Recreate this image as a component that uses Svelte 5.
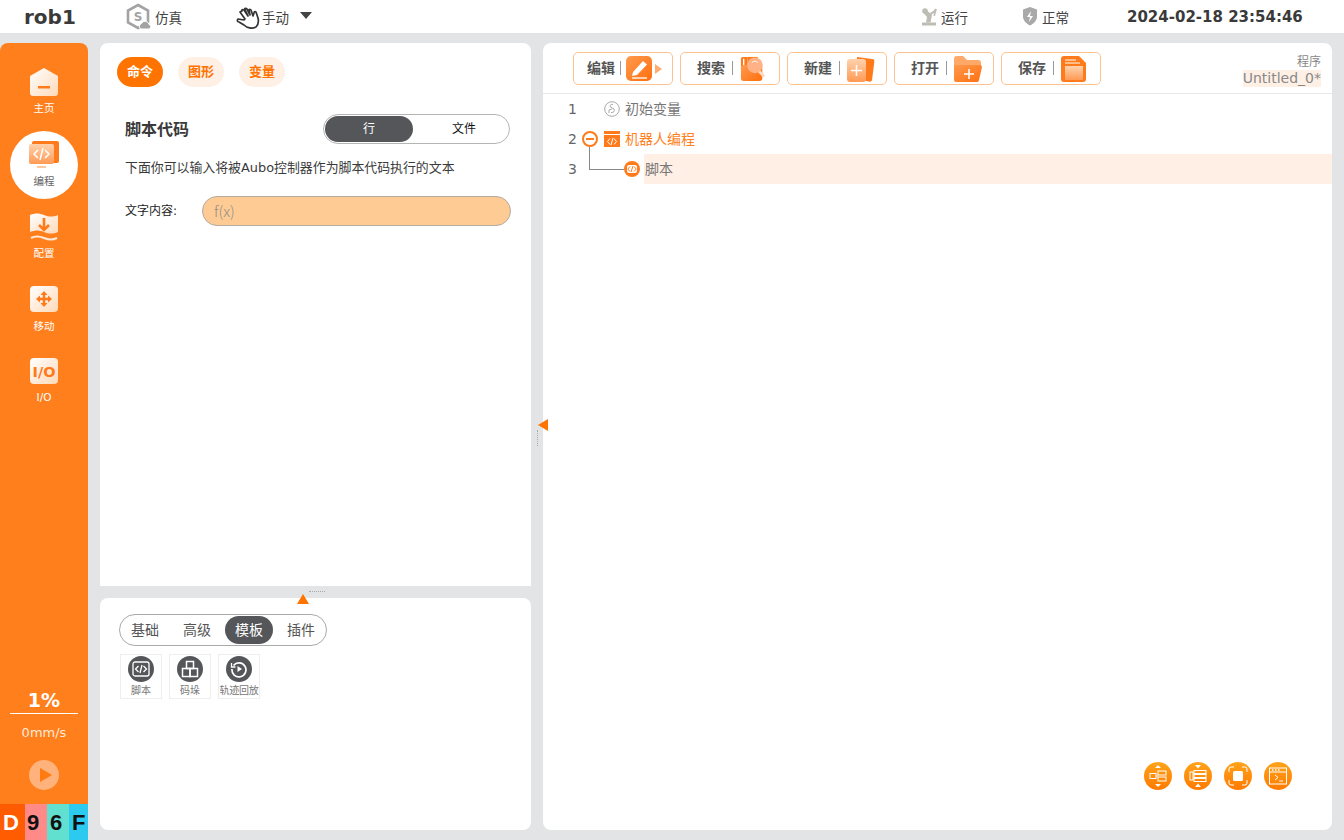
<script>
  const tools = [
    { label: '基础' },
    { label: '高级' },
    { label: '模板', active: true },
    { label: '插件' }
  ];
  const lines = [1, 2, 3];
</script>

<svg class="defs" width="0" height="0" aria-hidden="true">
  <defs>
    <linearGradient id="wh" x1="0" y1="0" x2="1" y2="1">
      <stop offset="0" stop-color="#fff" />
      <stop offset="1" stop-color="#ffd9b8" />
    </linearGradient>
    <linearGradient id="or" x1="0" y1="0" x2="1" y2="1">
      <stop offset="0" stop-color="#ff9a4d" />
      <stop offset="1" stop-color="#ff6f0f" />
    </linearGradient>
    <linearGradient id="pale" x1="0" y1="0" x2="0" y2="1">
      <stop offset="0" stop-color="#ffd2ad" />
      <stop offset="1" stop-color="#ff9a55" />
    </linearGradient>
  </defs>
</svg>

<div class="app">
  <header class="topbar">
    <span class="robot-name">rob1</span>
    <span class="status sim">
      <svg width="25" height="28" viewBox="0 0 25 28">
        <path d="M12 2l10 5.500v12L12 25 2 19.500v-12z" fill="none" stroke="#a3a3a3" stroke-width="2.600" />
        <text x="12" y="18" text-anchor="middle" font-size="12" font-weight="700" fill="#a3a3a3">S</text>
        <path d="M15 26a3 3 0 0 1 .5-5.500 4 4 0 0 1 7.500 1 2.300 2.300 0 0 1 0 4.500z" fill="#a3a3a3" stroke="#fff" />
      </svg>
      仿真
    </span>
    <span class="status mode">
      <svg width="25" height="25" viewBox="0 0 25 25" fill="none" stroke="#333" stroke-width="1.700" stroke-linecap="round" stroke-linejoin="round">
        <path d="M5 8l5 7-1 1-6-1c-1 1-1 3 1 3l5 3c3 3 8 4 12 2 2-2 3-5 2-9l-2-6c-1-1-2 0-2 1l-1 3-2-6c-1-1-2-1-2 0l1 5-3-6c-1-1-3-1-2 1l3 6-4-6c-1-1-3 0-2 1z" />
      </svg>
      手动
      <span class="caret"></span>
    </span>
    <span class="status run">
      <svg width="17" height="18" viewBox="0 0 17 18" fill="#bdbdb5">
        <rect x="1" y="14.500" width="14" height="3" />
        <path d="M5 14.500L6 9 2.500 5l3-3 5.500 5-1.500 7.500z" />
        <circle cx="4" cy="3" r="2.800" />
        <path d="M9 5l4-2.500 1-2 2 1-1 2.500-1 4h-1.500l.5-3-3 2z" />
      </svg>
      运行
    </span>
    <span class="status safe">
      <svg width="16" height="19" viewBox="0 0 16 19">
        <path d="M8 0l7 2.500v7c0 4-3 7-7 9-4-2-7-5-7-9v-7z" fill="#a9a9a9" />
        <path d="M9 4L5 10h3l-1 5 4-6H8z" fill="#fff" />
      </svg>
      正常
    </span>
    <span class="clock">2024-02-18 23:54:46</span>
  </header>

  <div class="workspace">
    <nav class="sidebar">
      <div class="nav-list">
        <div class="nav-item">
          <svg width="28" height="28" viewBox="0 0 28 28">
            <path d="M14 0l14 8v17a3 3 0 0 1-3 3H3a3 3 0 0 1-3-3V8z" fill="url(#wh)" />
            <rect x="8" y="18" width="12" height="2.500" fill="#ff7a1a" />
          </svg>
          <span>主页</span>
        </div>
        <div class="nav-item active">
          <svg width="30" height="28" viewBox="0 0 30 28">
            <rect x="3" y="0" width="27" height="22" rx="2" fill="#ff7a1a" />
            <rect x="0" y="3" width="25" height="20" rx="2" fill="url(#pale)" />
            <path d="M8 25h9v2H8z" fill="#ffc79c" />
            <path d="M9 9l-4 4 4 4M16 9l4 4-4 4M14 7l-3 12" fill="none" stroke="#fff" stroke-width="1.500" />
          </svg>
          <span>编程</span>
        </div>
        <div class="nav-item">
          <svg width="28" height="28" viewBox="0 0 28 28">
            <path d="M0 2c5-2 9-2 14 0 5 2 9 2 14 0v17c-5 2-9 2-14 0-5-2-9-2-14 0z" fill="url(#wh)" />
            <path d="M14 5v12M9 12l5 5 5-5" fill="none" stroke="#ff7a1a" stroke-width="2.600" />
            <path d="M1 25c4-2 8-2 13 0s9 2 13 0" fill="none" stroke="#ffe9d8" stroke-width="2" />
          </svg>
          <span>配置</span>
        </div>
        <div class="nav-item">
          <svg width="28" height="26" viewBox="0 0 28 26">
            <rect width="28" height="26" rx="4" fill="url(#wh)" />
            <path d="M14 8v10M9 13h10" stroke="#ff7a1a" stroke-width="2.400" />
            <path d="M14 5l3.500 4h-7zM14 21l3.500-4h-7zM6 13l4-3.500v7zM22 13l-4-3.500v7z" fill="#ff7a1a" />
          </svg>
          <span class="down">移动</span>
        </div>
        <div class="nav-item">
          <svg width="28" height="26" viewBox="0 0 28 26">
            <rect width="28" height="26" rx="4" fill="url(#wh)" />
            <text x="14" y="19" text-anchor="middle" font-size="14.500" font-weight="700" fill="#ff7a1a">I/O</text>
          </svg>
          <span class="down-2">I/O</span>
        </div>
      </div>

      <div class="speed">
        <div class="percent">1%</div>
        <div class="mm">0mm/s</div>
        <div class="play"><span></span></div>
      </div>
      <div class="code">
        <span class="c-d">D</span><span class="c-9">9</span><span class="c-6">6</span><span class="c-f">F</span>
      </div>
    </nav>

    <div class="left-col">
      <section class="card props">
        <div class="tabs">
          <span class="tab on">命令</span>
          <span class="tab">图形</span>
          <span class="tab">变量</span>
        </div>
        <div class="title-row">
          <h2>脚本代码</h2>
          <div class="toggle">
            <span class="toggle-on">行</span>
            <span class="toggle-off">文件</span>
          </div>
        </div>
        <p class="desc">下面你可以输入将被Aubo控制器作为脚本代码执行的文本</p>
        <div class="field">
          <span class="field-label">文字内容:</span>
          <div class="input">f(x)</div>
        </div>
      </section>

      <section class="card palette">
        <div class="seg">
          {#each tools as t}
            <span class="seg-item" class:seg-on={t.active}>{t.label}</span>
          {/each}
        </div>
        <div class="tiles">
          <div class="tile">
            <span class="disc">
              <svg width="18" height="16" viewBox="0 0 18 16" fill="none" stroke="#fff" stroke-width="1.300">
                <rect x="1" y="1" width="16" height="14" rx="2" />
                <path d="M6.500 5l-3 3 3 3M11.500 5l3 3-3 3M10 4l-2 8" />
              </svg>
            </span>
            <span>脚本</span>
          </div>
          <div class="tile">
            <span class="disc">
              <svg width="18" height="18" viewBox="0 0 18 18" fill="none" stroke="#fff" stroke-width="1.500">
                <rect x="5.500" y="1.500" width="7" height="7" />
                <rect x="1.500" y="8.500" width="7.500" height="8" />
                <rect x="9" y="8.500" width="7.500" height="8" />
              </svg>
            </span>
            <span>码垛</span>
          </div>
          <div class="tile">
            <span class="disc">
              <svg width="18" height="18" viewBox="0 0 18 18" fill="none" stroke="#fff" stroke-width="1.700">
                <path d="M3.500 5.500A7 7 0 1 1 2 9" />
                <path d="M1.500 3v4h4" stroke-width="1.300" />
                <path d="M7.500 6l4.500 3-4.500 3z" fill="#fff" stroke="none" />
              </svg>
            </span>
            <span class="tight">轨迹回放</span>
          </div>
        </div>
        <span class="grip-h"></span>
        <span class="tri-up"></span>
      </section>
    </div>

    <section class="card program">
      <div class="toolbar">
        <div class="btn edit">
          <span>编辑</span><i></i>
          <svg width="26" height="26" viewBox="0 0 26 26">
            <rect width="26" height="25" rx="5" fill="url(#or)" />
            <path d="M7 16L17 5l4 3.500L11 19l-5 1z" fill="#fff" />
            <path d="M6 22h15" stroke="#fff" stroke-width="1.300" />
          </svg>
          <b class="arrow"></b>
        </div>
        <div class="btn">
          <span>搜索</span><i></i>
          <svg width="26" height="26" viewBox="0 0 28 26">
            <path d="M3 0h5v13H1V2a2 2 0 0 1 2-2z" fill="#ff7a1a" />
            <rect x="1" y="9" width="23" height="17" rx="3" fill="url(#or)" />
            <rect x="8" y="0" width="11" height="12" fill="#ff7a1a" />
            <path d="M4 2v7" stroke="#fff" stroke-width="1.500" />
            <path d="M20 15l6 6" stroke="#ffd9bd" stroke-width="3" />
            <circle cx="16" cy="9" r="8.500" fill="#ffb285" />
            <path d="M13 6c2-2 4-2 6 0" fill="none" stroke="#fff" />
          </svg>
        </div>
        <div class="btn">
          <span>新建</span><i></i>
          <svg width="28" height="26" viewBox="0 0 28 26">
            <path d="M10 1l15 2c2 .3 2.500 1 2.300 3L25 24c-.2 1.500-2 2-3 1.500L9 23z" fill="#ff7a1a" />
            <rect x="0" y="3" width="19" height="23" rx="3" fill="url(#pale)" />
            <path d="M9.500 9v11M4 14.500h11" stroke="#fff" stroke-width="1.500" />
          </svg>
        </div>
        <div class="btn">
          <span>打开</span><i></i>
          <svg width="28" height="26" viewBox="0 0 28 26">
            <path d="M0 3a3 3 0 0 1 3-3h6l4 4h11a3 3 0 0 1 3 3v5H0z" fill="#ffa868" />
            <path d="M0 9h27l1 2-3 13a2 2 0 0 1-2 2H2a2 2 0 0 1-2-2z" fill="url(#or)" />
            <path d="M15 13v10M10 18h10" stroke="#fff" stroke-width="1.500" />
          </svg>
        </div>
        <div class="btn">
          <span>保存</span><i></i>
          <svg width="26" height="26" viewBox="0 0 26 26">
            <path d="M3 0h15l7 7v16a3 3 0 0 1-3 3H3a3 3 0 0 1-3-3V3a3 3 0 0 1 3-3z" fill="#ff7a1a" />
            <path d="M4 4h11M4 7h15" stroke="#ffd2ad" stroke-width="1.300" />
            <path d="M4 10h18v14H4z" fill="url(#pale)" />
          </svg>
        </div>
        <div class="file-info">
          <span>程序</span>
          <span class="file-name">Untitled_0*</span>
        </div>
      </div>

      <div class="tree">
        <div class="numbers">
          {#each lines as n}<span>{n}</span>{/each}
        </div>
        <div class="rows">
          <div class="row first">
            <svg width="16" height="16" viewBox="0 0 16 16" fill="none" stroke="#a9a9a9">
              <circle cx="8" cy="8" r="7.300" />
              <path d="M9 3.500c-2-.7-3.500.8-2.500 2.500L10 8c1 1.500 0 4-3 3.500M8 8l-3 1v3" />
            </svg>
            初始变量
          </div>
          <div class="row second">
            <span class="minus"></span>
            <svg width="16" height="16" viewBox="0 0 16 16">
              <path d="M0 0h16v16H0z" fill="#ff7a1a" />
              <path d="M0 3.500h16" stroke="#fff" />
              <path d="M6 7.500l-2.500 3 2.500 3M10 7.500l2.500 3-2.500 3M9 7l-2 7" fill="none" stroke="#fff" />
            </svg>
            机器人编程
          </div>
          <div class="row third">
            <span class="branch"></span>
            <span class="node">
              <svg width="10" height="8" viewBox="0 0 10 8" fill="none" stroke="#ff7a1a">
                <path d="M3 1.500L.8 4 3 6.500M7 1.500L9.200 4 7 6.500M6 1L4 7" />
              </svg>
            </span>
            <span class="row-text">脚本</span>
          </div>
        </div>
      </div>

      <div class="float-tools">
        <span class="ball">
          <svg width="22" height="22" viewBox="0 0 22 22" fill="none" stroke="#fff">
            <rect x="3" y="8.500" width="6" height="5" />
            <rect x="11" y="6" width="8" height="4" />
            <rect x="11" y="12" width="8" height="4" />
            <path d="M9 11h2" />
            <path d="M11 0l3 3H8zM11 22l3-3H8z" fill="#fff" stroke="none" />
          </svg>
        </span>
        <span class="ball">
          <svg width="22" height="22" viewBox="0 0 22 22" fill="none" stroke="#fff">
            <rect x="3" y="7" width="3" height="8" />
            <rect x="7" y="5.500" width="12" height="3" />
            <rect x="7" y="9.500" width="12" height="3" />
            <rect x="7" y="13.500" width="12" height="3" />
            <path d="M8 0h6l-3 3.500zM8 22h6l-3-3.500z" fill="#fff" stroke="none" />
          </svg>
        </span>
        <span class="ball">
          <svg width="20" height="20" viewBox="0 0 20 20" fill="none" stroke="#fff">
            <path d="M1 6V3a2 2 0 0 1 2-2h3M14 1h3a2 2 0 0 1 2 2v3M19 14v3a2 2 0 0 1-2 2h-3M6 19H3a2 2 0 0 1-2-2v-3" />
            <rect x="5" y="5" width="10" height="10" rx="1.500" fill="#fff" stroke="none" />
          </svg>
        </span>
        <span class="ball">
          <svg width="20" height="20" viewBox="0 0 20 20" fill="none" stroke="#fff">
            <rect x="1.500" y="2" width="17" height="16" />
            <path d="M1.500 6h17M7 9l3 2.500L7 14M11 15h4" />
            <path d="M4 4h1.500M7 4h1.500M10 4h1.500" stroke-width="1.500" />
          </svg>
        </span>
      </div>
      <span class="grip-v"></span>
      <span class="tri-left"></span>
    </section>
  </div>
</div>

<style>
  :global(body) {
    margin: 0;
    background: #e3e4e6;
    font-family: "DejaVu Sans", "Noto Sans CJK SC", sans-serif;
    color: #444;
  }
  .defs {
    position: absolute;
  }
  .app {
    width: 1344px;
    height: 840px;
    overflow: hidden;
    display: flex;
    flex-direction: column;
  }

  /* top bar */
  .topbar {
    height: 33px;
    background: #fff;
    display: flex;
    align-items: center;
    flex: none;
  }
  .robot-name {
    margin-left: 24px;
    width: 102px;
    font-size: 20px;
    font-weight: 700;
    color: #3a3a3a;
  }
  .status {
    display: inline-flex;
    align-items: center;
    gap: 3px;
    font-size: 13.500px;
    color: #444;
    height: 33px;
  }
  .sim { width: 109px; gap: 4px; }
  .mode { width: 686px; gap: 2px; }
  .run { width: 101px; }
  .safe { width: 105px; gap: 4px; }
  .caret {
    margin-left: 9px;
    width: 0;
    height: 0;
    border-left: 6px solid transparent;
    border-right: 6px solid transparent;
    border-top: 7px solid #444;
    margin-top: -2px;
  }
  .clock {
    font-size: 15px;
    font-weight: 700;
    color: #3a3a3a;
    white-space: nowrap;
  }

  .workspace {
    flex: 1;
    display: flex;
    padding-top: 10px;
    min-height: 0;
  }

  /* sidebar */
  .sidebar {
    width: 88px;
    flex: none;
    background: #ff7f1c;
    border-radius: 8px 8px 0 0;
    display: flex;
    flex-direction: column;
    color: #fff;
  }
  .nav-list {
    padding-top: 25px;
    display: flex;
    flex-direction: column;
    flex: 1;
  }
  .nav-item {
    height: 72.500px;
    display: flex;
    flex-direction: column;
    align-items: center;
    gap: 5px;
    font-size: 10.500px;
    position: relative;
  }
  .nav-item span {
    line-height: 15px;
    position: relative;
  }
  .nav-item svg {
    position: relative;
    z-index: 1;
  }
  .nav-item.active {
    color: #666;
  }
  .nav-item.active::before {
    content: "";
    position: absolute;
    left: 10px;
    top: -10px;
    width: 68px;
    height: 68px;
    border-radius: 50%;
    background: #fff;
  }
  .down {
    margin-top: 2px;
  }
  .down-2 {
    margin-top: 1px;
  }
  .speed {
    display: flex;
    flex-direction: column;
    align-items: center;
    padding-bottom: 14px;
  }
  .percent {
    width: 68px;
    text-align: center;
    font-size: 19px;
    font-weight: 700;
    line-height: 24px;
    padding-bottom: 1px;
    border-bottom: 1px solid #fff;
  }
  .mm {
    font-size: 13px;
    line-height: 16px;
    margin-top: 11px;
    color: #ffe9d8;
  }
  .play {
    margin-top: 19px;
    width: 30px;
    height: 30px;
    border-radius: 50%;
    background: #ffb27c;
    display: flex;
    align-items: center;
    justify-content: center;
  }
  .play span {
    margin-left: 3px;
    border-left: 12px solid #ff7a0f;
    border-top: 7px solid transparent;
    border-bottom: 7px solid transparent;
  }
  .code {
    display: grid;
    grid-template-columns: 25px 22px 22px 19px;
    height: 36px;
    font-family: "Liberation Sans", sans-serif;
    font-size: 22px;
    font-weight: 700;
    line-height: 38px;
    color: #111;
  }
  .code span {
    padding-left: 2px;
  }
  .c-d { background: #ff5b00; color: #fff; }
  .code .c-d { padding-left: 3px; }
  .c-9 { background: #ff8a88; }
  .c-6 { background: #62e0cf; }
  .code .c-6, .code .c-f { padding-left: 3px; }
  .c-f { background: #2dcaf0; }

  /* cards */
  .card {
    background: #fff;
    border-radius: 8px;
    position: relative;
  }
  .left-col {
    margin-left: 12px;
    width: 431px;
    display: flex;
    flex-direction: column;
    gap: 12px;
    margin-bottom: 10px;
  }
  .props {
    height: 543px;
    border-radius: 8px 8px 0 0;
    padding: 14px 20px 0 17px;
    box-sizing: border-box;
  }
  .tabs {
    display: flex;
    gap: 15px;
  }
  .tab {
    width: 46px;
    height: 30px;
    line-height: 30px;
    border-radius: 15px;
    text-align: center;
    font-size: 13px;
    font-weight: 700;
    color: #ff7300;
    background: #fff0e6;
  }
  .tab.on {
    background: #ff7300;
    color: #fff;
  }
  .title-row {
    margin-top: 27px;
    display: flex;
    justify-content: space-between;
    align-items: center;
    padding: 0 1px 0 8px;
  }
  h2 {
    margin: 0;
    padding-bottom: 2px;
    font-size: 16px;
    font-weight: 700;
    color: #3a3a3a;
  }
  .toggle {
    width: 187px;
    height: 30px;
    box-sizing: border-box;
    border: 1px solid #b5b5b5;
    border-radius: 15px;
    padding: 1px;
    display: grid;
    grid-template-columns: 88px 1fr;
    font-size: 12px;
    line-height: 26px;
    text-align: center;
    color: #111;
  }
  .toggle-on {
    background: #54565a;
    color: #fff;
    border-radius: 13px;
  }
  .toggle-off {
    padding-left: 7px;
  }
  .desc {
    margin: 14px 0 0 8px;
    font-size: 12.900px;
    line-height: 20px;
    color: #3a3a3a;
    white-space: nowrap;
  }
  .field {
    margin: 18px 0 0 8px;
    display: flex;
    align-items: center;
  }
  .field-label {
    width: 77px;
    flex: none;
    font-size: 12px;
    color: #222;
    padding-bottom: 3px;
  }
  .input {
    width: 309px;
    flex: none;
    height: 30px;
    box-sizing: border-box;
    border: 1px solid #b3aaa0;
    border-radius: 15px;
    background: #fecb94;
    padding-left: 11px;
    font-family: "Noto Sans CJK SC", sans-serif;
    font-weight: 300;
    font-size: 15px;
    line-height: 28px;
    color: #948f85;
  }

  .palette {
    flex: 1;
    padding: 16px 0 0 19px;
  }
  .seg {
    width: 208px;
    height: 32px;
    box-sizing: border-box;
    border: 1px solid #aaa;
    border-radius: 16px;
    display: flex;
    align-items: center;
    padding: 0 1px;
    gap: 4px;
  }
  .seg-item {
    width: 48px;
    height: 28px;
    line-height: 28px;
    text-align: center;
    border-radius: 14px;
    font-size: 14px;
    color: #555;
  }
  .seg-on {
    background: #54565a;
    color: #fff;
  }
  .tiles {
    margin: 8px 0 0 1px;
    display: flex;
    gap: 7px;
  }
  .tile {
    width: 42px;
    height: 45px;
    box-sizing: border-box;
    border: 1px solid #eee;
    display: flex;
    flex-direction: column;
    align-items: center;
    font-size: 10px;
    line-height: 14px;
    color: #777;
    padding-top: 1px;
    white-space: nowrap;
  }
  .tight {
    letter-spacing: -0.300px;
  }
  .disc {
    width: 26px;
    height: 26px;
    border-radius: 50%;
    background: #54565a;
    display: flex;
    align-items: center;
    justify-content: center;
    margin-bottom: 2px;
  }
  .grip-h {
    position: absolute;
    left: 209px;
    top: -7px;
    width: 16px;
    border-top: 1px dotted #aaa;
  }
  .tri-up {
    position: absolute;
    left: 197px;
    top: -4px;
    border-left: 6px solid transparent;
    border-right: 6px solid transparent;
    border-bottom: 10px solid #ff7300;
  }

  /* program */
  .program {
    margin-left: 12px;
    width: 789px;
    margin-bottom: 10px;
  }
  .toolbar {
    height: 51px;
    box-sizing: border-box;
    border-bottom: 1px solid #e8e8e8;
    padding: 9px 11px 0 30px;
    display: flex;
    gap: 7px;
  }
  .btn {
    width: 100px;
    height: 33px;
    box-sizing: border-box;
    border: 1px solid #fdc290;
    border-radius: 5px;
    padding-left: 16px;
    display: flex;
    align-items: center;
    font-size: 14px;
    font-weight: 700;
    color: #555;
    gap: 7px;
    flex: none;
  }
  .btn span {
    margin-bottom: 3px;
  }
  .btn.edit {
    padding-left: 13px;
    gap: 5px;
  }
  .btn i {
    width: 1px;
    height: 14px;
    background: #999;
    margin-bottom: 2px;
  }
  .arrow {
    margin-left: -2px;
    border-left: 7px solid #ffad73;
    border-top: 5px solid transparent;
    border-bottom: 5px solid transparent;
  }
  .file-info {
    margin-left: auto;
    display: flex;
    flex-direction: column;
    align-items: flex-end;
    font-size: 12px;
    color: #888;
    line-height: 16px;
    padding-top: 2px;
  }
  .file-name {
    font-size: 14px;
    line-height: 17px;
    background: #fff0e6;
  }
  .tree {
    display: flex;
  }
  .numbers {
    width: 37px;
    display: flex;
    flex-direction: column;
    align-items: flex-end;
    font-size: 14px;
    color: #666;
  }
  .numbers span {
    height: 30px;
    line-height: 30px;
    width: 12px;
  }
  .rows {
    flex: 1;
  }
  .row {
    height: 30px;
    line-height: 30px;
    display: flex;
    align-items: center;
    position: relative;
    font-size: 14px;
    color: #777;
    gap: 5px;
  }
  .first {
    padding-left: 24px;
  }
  .second {
    padding-left: 24px;
    color: #ff7f1c;
  }
  .minus {
    position: absolute;
    left: 2px;
    top: 7px;
    width: 16px;
    height: 16px;
    box-sizing: border-box;
    border: 2px solid #ff7a1a;
    border-radius: 50%;
  }
  .minus::after {
    content: "";
    position: absolute;
    left: 2px;
    top: 5px;
    width: 8px;
    height: 2px;
    background: #ff7a1a;
  }
  .branch {
    position: absolute;
    left: 9px;
    top: -7px;
    width: 35px;
    height: 23px;
    box-sizing: border-box;
    border-left: 1px solid #888;
    border-bottom: 1px solid #888;
  }
  .node {
    position: absolute;
    left: 44px;
    top: 7px;
    width: 16px;
    height: 16px;
    border-radius: 50%;
    background: #ff7a1a;
    display: flex;
    align-items: center;
    justify-content: center;
  }
  .node svg {
    background: #fff;
    border-radius: 2px;
  }
  .third {
    padding-left: 64px;
  }
  .row-text {
    background: #ffefe5;
    flex: 1;
    align-self: stretch;
    padding-left: 1px;
  }
  .float-tools {
    position: absolute;
    right: 40px;
    bottom: 40px;
    display: flex;
    gap: 12px;
  }
  .ball {
    width: 28px;
    height: 28px;
    border-radius: 50%;
    background: linear-gradient(#ffa31a, #ff7a00);
    display: flex;
    align-items: center;
    justify-content: center;
  }
  .grip-v {
    position: absolute;
    left: -6px;
    top: 387px;
    height: 16px;
    border-left: 1px dotted #aaa;
  }
  .tri-left {
    position: absolute;
    left: -5px;
    top: 376px;
    border-top: 6px solid transparent;
    border-bottom: 6px solid transparent;
    border-right: 10px solid #ff7300;
  }
</style>
